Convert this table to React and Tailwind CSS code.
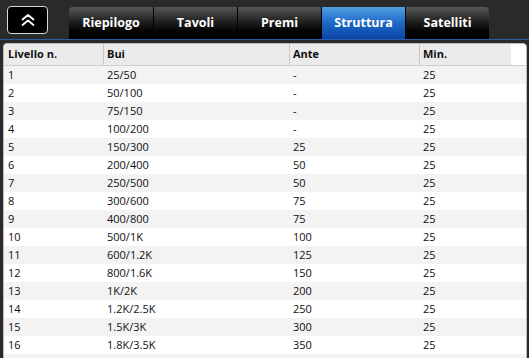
import React from 'react';

const tabs = ['Riepilogo', 'Tavoli', 'Premi', 'Struttura', 'Satelliti'];

const rows = [
  ['1', '25/50', '-', '25'],
  ['2', '50/100', '-', '25'],
  ['3', '75/150', '-', '25'],
  ['4', '100/200', '-', '25'],
  ['5', '150/300', '25', '25'],
  ['6', '200/400', '50', '25'],
  ['7', '250/500', '50', '25'],
  ['8', '300/600', '75', '25'],
  ['9', '400/800', '75', '25'],
  ['10', '500/1K', '100', '25'],
  ['11', '600/1.2K', '125', '25'],
  ['12', '800/1.6K', '150', '25'],
  ['13', '1K/2K', '200', '25'],
  ['14', '1.2K/2.5K', '250', '25'],
  ['15', '1.5K/3K', '300', '25'],
  ['16', '1.8K/3.5K', '350', '25'],
  ['', '', '', ''],
];

const App = () => {
  return (
    <div className="w-[529px] h-[358px] overflow-hidden bg-[#2a2a2a] font-['Open_Sans',sans-serif]">
      {/* Top bar */}
      <div className="flex items-start h-[39px]">
        <button className="ml-[7px] mt-[6px] w-[41px] h-[28px] bg-black border border-[#d8d8d8] rounded-[4px] flex items-center justify-center">
          <svg width="14" height="12" viewBox="0 0 14 12" fill="none" stroke="white" strokeWidth="1.8" strokeLinecap="round" strokeLinejoin="round">
            <path d="M1.5 5.5 L7 1 L12.5 5.5" />
            <path d="M1.5 11 L7 6.5 L12.5 11" />
          </svg>
        </button>

        {/* Tabs */}
        <div className="ml-[21px] mt-[7px] flex h-[32px] rounded-t-[4px] overflow-hidden">
          {tabs.map((tab, i) => (
            <div
              key={tab}
              className={
                (tab === 'Struttura'
                  ? 'bg-gradient-to-b from-[#4f9fe2] via-[#1e68c6] to-[#0a44a6]'
                  : 'bg-gradient-to-b from-[#585858] via-[#1c1c1c] to-black') +
                (i > 0 ? ' border-l border-black' : '') +
                ' w-[84px] flex items-center justify-center text-white font-bold text-[12.5px]'
              }
            >
              {tab}
            </div>
          ))}
        </div>
      </div>

      {/* Blue line */}
      <div className="h-[1px] bg-[#2d5fb0]" />

      {/* Table panel */}
      <div className="mt-[3px] ml-[3px] w-[524px] bg-white border border-[#bdbdbd] rounded-t-[4px] overflow-hidden text-[11px] text-[#111]">
        <div className="flex h-[22px] border-b border-[#cfcfcf]">
          <div className="flex bg-[#ebebeb] font-bold">
            <div className="w-[99px] pl-[4px] flex items-center">Livello n.</div>
            <div className="w-[186px] pl-[3px] flex items-center border-l border-[#c8c8c8]">Bui</div>
            <div className="w-[130px] pl-[3px] flex items-center border-l border-[#c8c8c8]">Ante</div>
            <div className="w-[92px] pl-[3px] flex items-center border-l border-[#c8c8c8]">Min.</div>
          </div>
        </div>
        {rows.map((r, i) => (
          <div key={i} className={(i % 2 === 0 ? 'bg-[#f3f3f3]' : 'bg-white') + ' flex h-[18px] items-center'}>
            <div className="w-[99px] pl-[4px]">{r[0]}</div>
            <div className="w-[186px] pl-[4px]">{r[1]}</div>
            <div className="w-[130px] pl-[4px]">{r[2]}</div>
            <div className="w-[92px] pl-[4px]">{r[3]}</div>
          </div>
        ))}
      </div>
    </div>
  );
};

export default App;
